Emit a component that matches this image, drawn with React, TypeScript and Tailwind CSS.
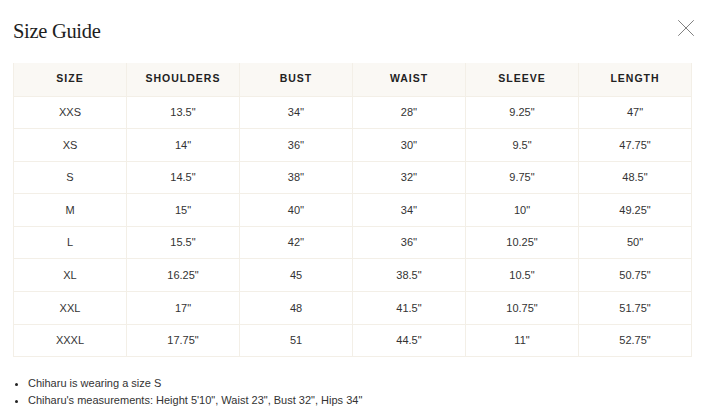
import { XIcon } from "lucide-react";

const headers = ["Size", "Shoulders", "Bust", "Waist", "Sleeve", "Length"];

const rows: string[][] = [
  ["XXS", "13.5\"", "34''", "28''", "9.25\"", "47\""],
  ["XS", "14\"", "36''", "30''", "9.5\"", "47.75\""],
  ["S", "14.5\"", "38''", "32''", "9.75\"", "48.5\""],
  ["M", "15\"", "40''", "34''", "10\"", "49.25\""],
  ["L", "15.5\"", "42''", "36''", "10.25\"", "50\""],
  ["XL", "16.25\"", "45", "38.5\"", "10.5\"", "50.75\""],
  ["XXL", "17\"", "48", "41.5\"", "10.75\"", "51.75\""],
  ["XXXL", "17.75\"", "51", "44.5\"", "11\"", "52.75\""],
];

export default function App() {
  return (
    <div className="h-[415px] w-[702px] bg-white px-[13px] font-['Liberation_Sans',Arial,sans-serif] text-[#2b2b2b]">
      <div className="flex h-[63px] items-start justify-between">
        <h2 className="pt-[18px] font-['Liberation_Serif',serif] text-[20.5px] leading-[26px] tracking-[-0.3px] text-[#1e1e1e]">
          Size Guide
        </h2>
        <button className="mt-[13px] mr-[-12px] text-[#777]" type="button">
          <XIcon className="size-[30px]" strokeWidth={0.75} />
        </button>
      </div>

      <table className="w-[679px] table-fixed border-collapse text-center text-[11px]">
        <thead>
          <tr className="bg-[#faf8f4]">
            {headers.map((h) => (
              <th
                key={h}
                className="h-[33px] border-x border-[#f3efe7] text-[10.5px] font-bold uppercase tracking-[1px] text-[#222]"
              >
                {h}
              </th>
            ))}
          </tr>
        </thead>
        <tbody>
          {rows.map((r) => (
            <tr key={r[0]}>
              {r.map((c, i) => (
                <td
                  key={i}
                  className="h-[32.6px] border border-[#f3efe7] p-0 text-[#333]"
                >
                  {c}
                </td>
              ))}
            </tr>
          ))}
        </tbody>
      </table>

      <ul className="mt-[18px] list-disc pl-[15px] text-[11px] leading-[16.5px] text-[#333] marker:text-[#222]">
        <li>Chiharu is wearing a size S</li>
        <li>Chiharu's measurements: Height 5'10", Waist 23", Bust 32", Hips 34"</li>
      </ul>
    </div>
  );
}
